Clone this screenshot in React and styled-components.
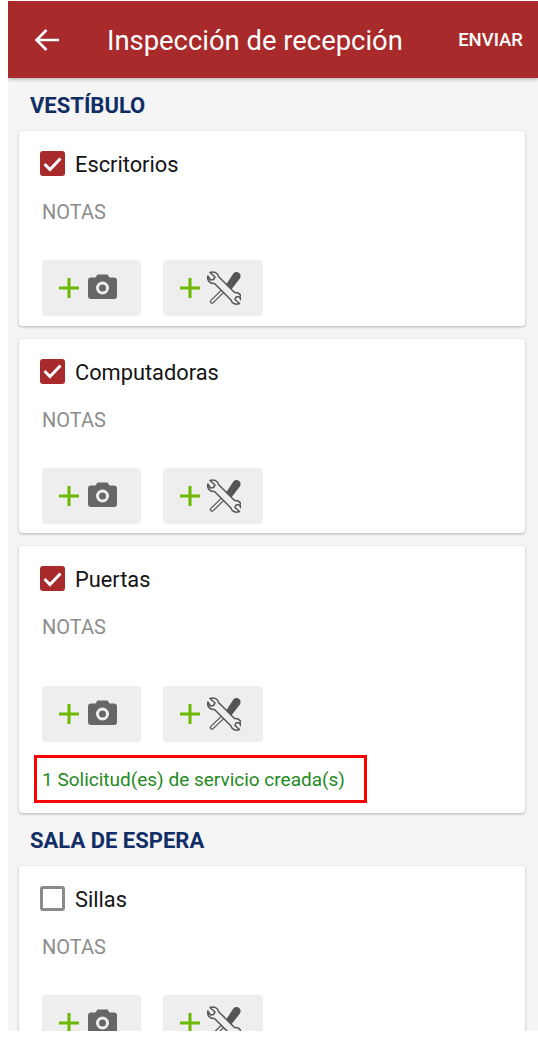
import React from "react";
import styled, { createGlobalStyle } from "styled-components";

const GlobalStyle = createGlobalStyle`
    html, body {
        margin: 0;
        padding: 0;
        background: #ffffff;
    }
    body {
        font-family: Roboto, "Liberation Sans", sans-serif;
    }
`;

const Screen = styled.div`
    margin: 1px 0 0 8px;
    width: 530px;
    height: 1030px;
    overflow: hidden;
    background: #f5f5f5;
`;

const Header = styled.header`
    height: 77px;
    display: flex;
    align-items: center;
    padding: 0 15px 0 26px;
    background: #a92a2a;
    box-shadow: 0 1px 4px rgba(0, 0, 0, 0.3);
    color: #ffffff;
`;

const BackIcon = styled.svg`
    width: 26px;
    height: 26px;
    flex: none;
`;

const Title = styled.h1`
    flex: 1;
    margin: 2px 0 0 47px;
    font-size: 27.4px;
    font-weight: 400;
    white-space: nowrap;
`;

const SendButton = styled.span`
    font-size: 18.5px;
    font-weight: 500;
`;

const Content = styled.main`
    padding: 0 13px 0 11px;
`;

const SectionTitle = styled.h2`
    height: 53px;
    margin: 0;
    padding: 15px 0 0 11px;
    box-sizing: border-box;
    font-size: 22px;
    line-height: 25px;
    font-weight: 700;
    color: #112d66;
`;

const Card = styled.section`
    margin-bottom: ${(p) => (p.$last ? "0" : "13px")};
    padding: 20px 21px 9.5px;
    box-sizing: border-box;
    background: #ffffff;
    border-radius: 3px;
    box-shadow: 0 1px 3px rgba(0, 0, 0, 0.28);
`;

const CheckRow = styled.div`
    display: flex;
    align-items: center;
    gap: 10px;
    height: 25px;
`;

const CheckBox = styled.span`
    width: 25px;
    height: 25px;
    box-sizing: border-box;
    display: flex;
    align-items: center;
    justify-content: center;
    border-radius: 3px;
    background: ${(p) => (p.$checked ? "#a92a2a" : "#ffffff")};
    border: ${(p) => (p.$checked ? "none" : "3px solid #8a8a8a")};
`;

const ItemLabel = styled.span`
    margin-top: 2px;
    font-size: 21.8px;
    color: #141414;
`;

const Notes = styled.div`
    margin: 24px 0 0 2px;
    height: 24px;
    font-size: 20px;
    line-height: 24px;
    color: #8c8c8c;
`;

const Actions = styled.div`
    display: flex;
    gap: 22px;
    margin: ${(p) => (p.$tall ? "47px" : "36px")} 0 0 1.7px;
`;

const ActionButton = styled.button`
    width: 99.5px;
    height: 56px;
    padding: 0 0 0 17px;
    display: flex;
    align-items: center;
    gap: ${(p) => p.$gap}px;
    border: none;
    border-radius: 4px;
    background: #eeeeee;
`;

const ServiceNote = styled.div`
    height: 48px;
    width: 333px;
    box-sizing: border-box;
    margin: 13px 0 0 -6px;
    padding-left: 5px;
    display: flex;
    align-items: center;
    border: 3px solid #ff0000;
    font-size: 19px;
    color: #1f8a1f;
    white-space: nowrap;
`;

const CameraIcon = styled.svg`
    margin-bottom: 3px;
`;

const Plus = () => (
    <svg width="20" height="20" viewBox="0 0 20 20">
        <path d="M10 0v20M0 10h20" stroke="#6cb800" strokeWidth="3" />
    </svg>
);

const Camera = () => (
    <CameraIcon width="29" height="25" viewBox="0 0 29 25">
        <path
            d="M9.500 0.500h10l2 3H26a3 3 0 0 1 3 3V22a3 3 0 0 1-3 3H3a3 3 0 0 1-3-3V6.500a3 3 0 0 1 3-3h4.500z"
            fill="#666666"
        />
        <circle cx="14.500" cy="14" r="5" fill="none" stroke="#eeeeee" strokeWidth="3" />
    </CameraIcon>
);

const Tools = () => (
    <svg width="34" height="34" viewBox="0 0 34 34">
        <path
            d="M18 18L5 30.500"
            stroke="#555555"
            strokeWidth="4.500"
            strokeLinecap="round"
        />
        <path
            d="M18 18L5 30.500"
            stroke="#eeeeee"
            strokeWidth="2"
            strokeLinecap="round"
        />
        <path
            d="M18.500 14.500L26 3c1.500-2.200 4.500-2.500 6.200-1 1.700 1.500 1.800 3.800 0.500 5.800L23.500 19.500z"
            fill="#555555"
        />
        <path
            d="M3 1.500L8 6l-1.500 2.500L3.500 9 0.800 5C0 9 2.500 13 7.500 12.500L24 29c1 4 5 5 8.500 3.500L28 28.500l1-2.500 3-0.500 2 3.500c1-4-1.500-8-6.500-7.500L11.500 5.500C11 2 7 0 3 1.500z"
            fill="#eeeeee"
            stroke="#555555"
            strokeWidth="1.500"
            strokeLinejoin="round"
        />
    </svg>
);

const Check = () => (
    <svg width="19" height="16" viewBox="0 0 19 16">
        <path d="M1.500 8l5.500 5.500L17.500 2.500" fill="none" stroke="#ffffff" strokeWidth="3" />
    </svg>
);

const InspectionCard = ({ label, checked, requests, last }) => (
    <Card $last={last}>
        <CheckRow>
            <CheckBox $checked={checked}>{checked && <Check />}</CheckBox>
            <ItemLabel>{label}</ItemLabel>
        </CheckRow>
        <Notes>NOTAS</Notes>
        <Actions $tall={!!requests}>
            <ActionButton $gap={9}>
                <Plus />
                <Camera />
            </ActionButton>
            <ActionButton $gap={7}>
                <Plus />
                <Tools />
            </ActionButton>
        </Actions>
        {requests && <ServiceNote>{requests}</ServiceNote>}
    </Card>
);

export default function App() {
    return (
        <>
            <GlobalStyle />
            <Screen>
                <Header>
                    <BackIcon viewBox="0 0 26 26">
                        <path
                            d="M25 13H3M12.500 3L2.500 13l10 10"
                            fill="none"
                            stroke="#ffffff"
                            strokeWidth="2.600"
                        />
                    </BackIcon>
                    <Title>Inspección de recepción</Title>
                    <SendButton>ENVIAR</SendButton>
                </Header>
                <Content>
                    <SectionTitle>VESTÍBULO</SectionTitle>
                    <InspectionCard label="Escritorios" checked />
                    <InspectionCard label="Computadoras" checked />
                    <InspectionCard
                        label="Puertas"
                        checked
                        last
                        requests="1 Solicitud(es) de servicio creada(s)"
                    />
                    <SectionTitle>SALA DE ESPERA</SectionTitle>
                    <InspectionCard label="Sillas" />
                </Content>
            </Screen>
        </>
    );
}
